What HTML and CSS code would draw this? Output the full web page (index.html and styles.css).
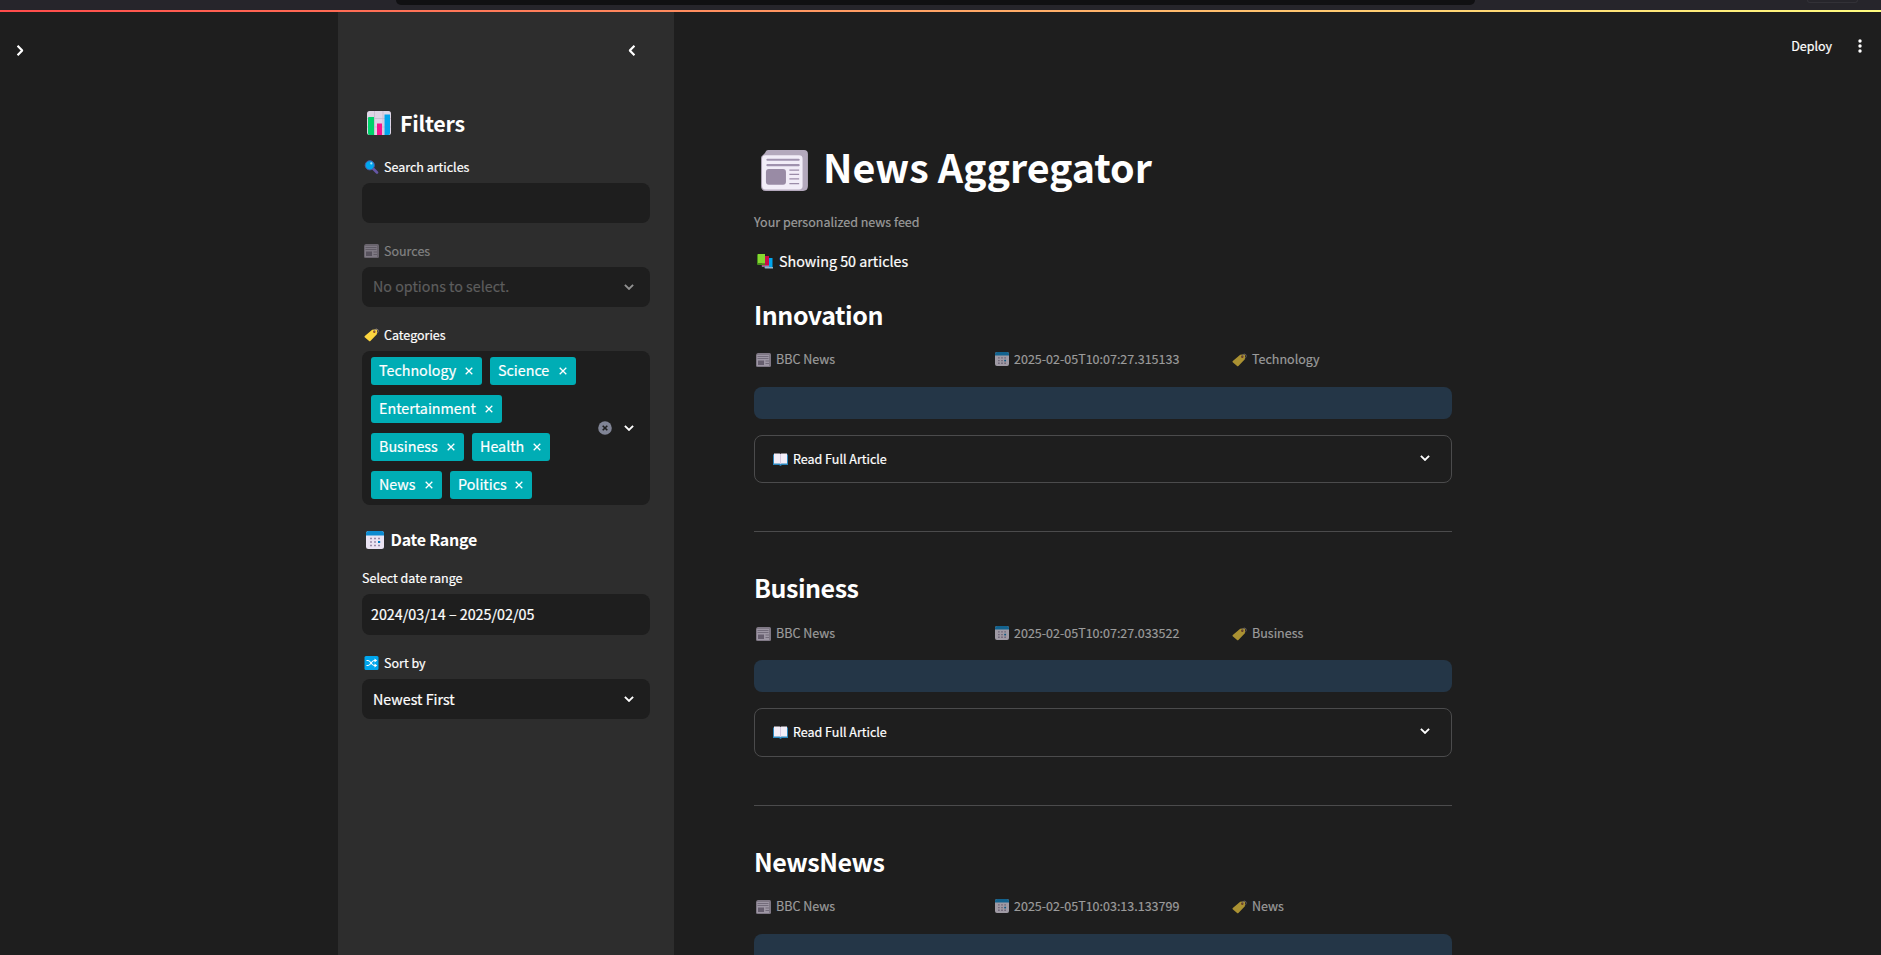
FILE: index.html
```html
<!DOCTYPE html>
<html lang="en">
<head>
<meta charset="utf-8">
<title>News Aggregator</title>
<link rel="stylesheet" href="styles.css">
</head>
<body>
<svg class="defs" aria-hidden="true">
  <symbol id="news" viewBox="0 0 48 42">
    <path d="M7 0h37q4 0 4 4v33q0 5-5 5H5q-5 0-5-5V8q0-2 2-3l2-2q1-3 3-3z" fill="#b4a9bd"/>
    <rect x="1" y="5.500" width="41.500" height="35" rx="3.500" fill="#f2edf8"/>
    <path d="M6.500 10h32M6.500 15.500h32" stroke="#a092ae" stroke-width="2.200" stroke-linecap="round"/>
    <path d="M29 20.500h10M29 25h10M29 29.500h10M29 34.500h10" stroke="#9b8ca8" stroke-width="1.300"/>
    <rect x="5" y="19.500" width="20.500" height="16" rx="3" fill="#998ba5"/>
  </symbol>
  <symbol id="news-small" viewBox="0 0 15 14">
    <path d="M2 0h11.500Q15 0 15 1.500v11q0 1.500-1.500 1.500h-12Q0 14 0 12.500V2Q.5.200 2 0z" fill="#a59bad"/>
    <path d="M1 2h12v11H1z" fill="#cfc5d8"/>
    <path d="M1.500 3.500h11M1.500 5.500h11M9.500 8H13M9.500 10.500H13" stroke="#8f8499" stroke-width=".9"/>
    <path d="M2 7.500h6V12H2z" fill="#82778e"/>
  </symbol>
  <symbol id="chart" viewBox="0 0 24 24">
    <rect width="24" height="24" rx="2.500" fill="#ded5e6"/>
    <path d="M7.500 0v24M16 0v24M0 7.500h24M0 16h24" stroke="#c5b9cf" stroke-width=".8"/>
    <path d="M1.500 6H7v18H2.500Q1 24 1 22V6.500z" fill="#00d26a"/>
    <path d="M10 12.500h5V24h-5z" fill="#f8128c"/>
    <path d="M17.500 3.500H23V22q0 2-1.500 2h-4z" fill="#00a6ed"/>
  </symbol>
  <symbol id="search" viewBox="0 0 14 14">
    <path d="M8.500 8.500l4 4" stroke="#6556a5" stroke-width="2.600" stroke-linecap="round"/>
    <circle cx="5.300" cy="5.300" r="4.600" fill="#00a6ed" stroke="#4b5aa8" stroke-width="1"/>
    <circle cx="6.800" cy="3.400" r="1.100" fill="#a5e0fb"/>
  </symbol>
  <symbol id="tag" viewBox="0 0 15 13">
    <path d="M8.200 1.300l4-.6 1 .9-.3 4.200-6.500 6.600q-.8.700-1.600-.2L.7 8.800q-.6-.7.100-1.400z" fill="#fcd53f"/>
    <circle cx="10.300" cy="3.300" r="1.200" fill="#8c4a28"/>
    <path d="M10.300 3q0-2.500 2.200-2.500 2.300.3 1.800 2.700-.3 1-1.400 1.500" fill="none" stroke="#8b8490" stroke-width=".8"/>
  </symbol>
  <symbol id="calendar" viewBox="0 0 18 18">
    <rect width="18" height="18" rx="2.500" fill="#eae3f2"/>
    <path d="M0 4.500V2.500Q0 0 2.500 0h13Q18 0 18 2.500v2z" fill="#0c8bd0"/>
    <path d="M4 7.500h11M4 11h11M4 14.500h11" stroke="#998aa8" stroke-width="1.700" stroke-dasharray="2 2"/>
    <rect x="12" y="10" width="2.200" height="2" fill="#007fc5"/>
  </symbol>
  <symbol id="shuffle" viewBox="0 0 14 14">
    <rect width="14" height="14" rx="1.500" fill="#00a6ed"/>
    <path d="M2 4.500h1.600c2.500 0 3.500 5 6 5H11M2 9.500h1.600c2.500 0 3.500-5 6-5H11" fill="none" stroke="#fff" stroke-width="1.200"/>
    <path d="M10 2.600l2.700 1.900L10 6.400zM10 7.600l2.700 1.900-2.700 1.900z" fill="#fff"/>
  </symbol>
  <symbol id="books" viewBox="0 0 16 15">
    <path d="M8 4h7.500v9.500H8z" fill="#00a6ed"/><path d="M7.500 13h8.500v1.600H8.500q-1 0-1-1.600z" fill="#8fb6ce"/>
    <path d="M5 2h7v10H5z" fill="#ca0b4a"/><path d="M4.500 11.500H12v1.300H5z" fill="#a893b5"/>
    <path d="M1 0h7v9.500H1z" fill="#86d72f"/><path d="M0 1q0-1 1-1v9.500h7V11H1q-1 0-1-1z" fill="#44911b"/>
  </symbol>
  <symbol id="book" viewBox="0 0 15 13">
    <path d="M0 1.500h15V12H9l-1.500 1L6 12H0z" fill="#2a86bd"/>
    <path d="M1 .5h5.700l.8.500.8-.5H14v10H8.300l-.8.700-.8-.7H1z" fill="#f3eef8"/>
    <path d="M7.500 1v10" stroke="#cdbfda" stroke-width=".8"/>
  </symbol>
  <symbol id="chevron" viewBox="0 0 10 6">
    <path d="M.9.900L5 4.900 9.100.900" fill="none" stroke="currentColor" stroke-width="1.900"/>
  </symbol>
  <symbol id="cross" viewBox="0 0 8 8">
    <path d="M.7.700l6.600 6.600M7.300.700L.7 7.300" stroke="currentColor" stroke-width="1.300"/>
  </symbol>
</svg>

<div class="browser"><div class="address"></div><div class="pill"></div></div>
<div class="rainbow"></div>
<div class="app">
  <div class="rail"><svg class="chev open"><use href="#chevron"/></svg></div>
  <aside class="sidebar">
    <div class="closer"><svg class="chev close"><use href="#chevron"/></svg></div>
    <h2 class="filters"><svg class="i-chart"><use href="#chart"/></svg><span>Filters</span></h2>

    <div class="label"><svg><use href="#search"/></svg><span>Search articles</span></div>
    <div class="field"></div>

    <div class="label dim"><svg><use href="#news-small"/></svg><span>Sources</span></div>
    <div class="field select disabled"><span>No options to select.</span><svg class="chev"><use href="#chevron"/></svg></div>

    <div class="label"><svg><use href="#tag"/></svg><span>Categories</span></div>
    <div class="field multi">
      <div class="tags">
        <div class="tag w-tech"><span>Technology</span><svg><use href="#cross"/></svg></div>
        <div class="tag w-sci"><span>Science</span><svg><use href="#cross"/></svg></div>
        <div class="tag w-ent"><span>Entertainment</span><svg><use href="#cross"/></svg></div>
        <div class="tag w-bus"><span>Business</span><svg><use href="#cross"/></svg></div>
        <div class="tag w-hea"><span>Health</span><svg><use href="#cross"/></svg></div>
        <div class="tag w-new"><span>News</span><svg><use href="#cross"/></svg></div>
        <div class="tag w-pol"><span>Politics</span><svg><use href="#cross"/></svg></div>
      </div>
      <svg class="clear" viewBox="0 0 14 14"><circle cx="7" cy="7" r="6.800" fill="#808495"/><path d="M4.700 4.700l4.600 4.600M9.300 4.700L4.700 9.300" stroke="#1e1e1e" stroke-width="1.600"/></svg>
      <svg class="chev"><use href="#chevron"/></svg>
    </div>

    <h3 class="range"><svg class="i-cal"><use href="#calendar"/></svg><span>Date Range</span></h3>
    <div class="label plain"><span>Select date range</span></div>
    <div class="field date"><span>2024/03/14 – 2025/02/05</span></div>

    <div class="label"><svg><use href="#shuffle"/></svg><span>Sort by</span></div>
    <div class="field select"><span>Newest First</span><svg class="chev"><use href="#chevron"/></svg></div>
  </aside>

  <main class="main">
    <div class="toolbar"><span>Deploy</span><svg class="dots" viewBox="0 0 4 14"><circle cx="2" cy="2" r="1.700"/><circle cx="2" cy="7" r="1.700"/><circle cx="2" cy="12" r="1.700"/></svg></div>
    <div class="content">
      <h1><svg class="i-title"><use href="#news"/></svg><span>News Aggregator</span></h1>
      <p class="caption"><span>Your personalized news feed</span></p>
      <p class="count"><svg><use href="#books"/></svg><span>Showing 50 articles</span></p>

      <article class="first">
        <h2>Innovation</h2>
        <div class="meta">
          <div><svg class="m-news"><use href="#news-small"/></svg><span>BBC News</span></div>
          <div><svg class="m-cal"><use href="#calendar"/></svg><span>2025-02-05T10:07:27.315133</span></div>
          <div><svg class="m-tag"><use href="#tag"/></svg><span>Technology</span></div>
        </div>
        <div class="info"></div>
        <div class="expander"><svg class="i-book"><use href="#book"/></svg><span>Read Full Article</span><svg class="chev"><use href="#chevron"/></svg></div>
        <hr>
      </article>

      <article class="second">
        <h2>Business</h2>
        <div class="meta">
          <div><svg class="m-news"><use href="#news-small"/></svg><span>BBC News</span></div>
          <div><svg class="m-cal"><use href="#calendar"/></svg><span>2025-02-05T10:07:27.033522</span></div>
          <div><svg class="m-tag"><use href="#tag"/></svg><span>Business</span></div>
        </div>
        <div class="info"></div>
        <div class="expander"><svg class="i-book"><use href="#book"/></svg><span>Read Full Article</span><svg class="chev"><use href="#chevron"/></svg></div>
        <hr>
      </article>

      <article class="last">
        <h2>NewsNews</h2>
        <div class="meta">
          <div><svg class="m-news"><use href="#news-small"/></svg><span>BBC News</span></div>
          <div><svg class="m-cal"><use href="#calendar"/></svg><span>2025-02-05T10:03:13.133799</span></div>
          <div><svg class="m-tag"><use href="#tag"/></svg><span>News</span></div>
        </div>
        <div class="info"></div>
      </article>
    </div>
  </main>
</div>
</body>
</html>
```
FILE: styles.css
```css
* { box-sizing: border-box; }
body {
  margin: 0;
  height: 955px;
  overflow: hidden;
  background: #1e1e1e;
  color: #fff;
  font-family: "Noto Sans CJK SC", "Noto Sans", sans-serif;
  font-size: 14.3px;
  -webkit-text-stroke: .2px currentColor;
  display: flex;
  flex-direction: column;
}
h1, h2, h3, p { margin: 0; }
h1, h2, h3 { -webkit-text-stroke: 0; }
span { white-space: nowrap; }
svg { flex: none; display: block; }
.defs { position: absolute; width: 0; height: 0; }

.browser {
  height: 10px;
  flex: none;
  background: #26252b;
  display: flex;
  padding-left: 396px;
}
.address { width: 1079px; height: 5px; background: #101012; border-radius: 0 0 7px 7px; }
.pill { width: 51px; height: 3px; margin-left: 332px; border: 1px solid #323137; border-top: 0; border-radius: 0 0 6px 6px; }
.rainbow { height: 2px; flex: none; background: linear-gradient(90deg, #ff4b4b, #fffd80); }

.app { display: flex; height: 943px; overflow: hidden; }
.rail { width: 338px; padding: 32px 0 0 15px; }
.chev { width: 10px; height: 6px; }
.open, .close { width: 12px; height: 7px; }
.open { transform: rotate(-90deg); margin: 2.500px 0 0 -1px; }
.close { transform: rotate(90deg); }

.sidebar { width: 336px; padding: 0 24px; background: #2d2d2d; }
.closer { height: 96px; padding: 34.500px 12px 0 0; display: flex; justify-content: flex-end; }
.filters { height: 29px; margin-bottom: 19px; display: flex; align-items: center; font-size: 21.4px; line-height: 29px; font-weight: 600; letter-spacing: -.25px; }
.i-chart { width: 24px; height: 24px; margin: 1px 9px 0 5px; }

.label { height: 21px; margin-bottom: 6px; display: flex; align-items: center; font-size: 12.5px; line-height: 21px; }
.label svg { margin-left: 2px; margin-right: 5px; width: 15px; height: 14px; }
.dim { color: #828282; }
.dim svg { opacity: .5; margin-top: 1px; }
.field {
  height: 40px;
  margin-bottom: 17px;
  border-radius: 8px;
  background: #1e1e1e;
  display: flex;
  align-items: center;
  line-height: 24px;
}
.select { justify-content: space-between; padding: 0 16px 0 11px; }
.disabled { color: #5d5d5d; }
.disabled span { margin-top: -2px; }
.disabled .chev { color: #929292; }
.multi { height: 154px; margin-bottom: 20px; padding-right: 16px; }
.tags { width: 231px; padding-left: 9px; display: flex; flex-wrap: wrap; gap: 10px 8px; }
.tag {
  height: 28px;
  padding: 0 9px 0 8px;
  border-radius: 3px;
  background: #00adb5;
  display: flex;
  align-items: center;
  justify-content: space-between;
}
.tag span { margin-top: -2px; }
.tag svg { width: 8px; height: 8px; margin-top: 0; }
.w-tech { width: 111px; }
.w-sci { width: 86px; }
.w-ent { width: 131px; margin-right: 40px; }
.w-bus { width: 93px; }
.w-hea { width: 78px; }
.w-new { width: 71px; }
.w-pol { width: 82px; }
.clear { width: 14px; height: 14px; margin: 0 12px 0 auto; }
.range { height: 28px; margin-bottom: 14px; display: flex; align-items: center; font-size: 16px; line-height: 28px; font-weight: 600; letter-spacing: -.25px; }
.i-cal { width: 18px; height: 18px; margin: 1px 7px 0 3.500px; }
.date { height: 41px; padding: 0 0 1px 9px; }

.main { width: 1207px; }
.toolbar { height: 127px; padding: 23px 19px 0 0; display: flex; justify-content: flex-end; align-items: flex-start; font-size: 12.5px; line-height: 22px; }
.dots { width: 4px; height: 14px; margin: 4px 0 0 26px; fill: #fff; }
.content { width: 698px; margin-left: 80px; }
h1 { height: 53px; display: flex; align-items: center; font-size: 39.4px; line-height: 53px; font-weight: 700; }
.i-title { width: 47px; height: 41px; margin: 10px 15px 0 7px; }
.caption { height: 21px; margin-top: 19px; font-size: 12.5px; line-height: 21px; color: #9b9b9b; }
.count { height: 24px; margin: 17px 0 24px; display: flex; align-items: center; line-height: 24px; }
.count svg { width: 16px; height: 15px; margin: 1px 6px 0 3px; }

article { height: 274px; }
.first { height: 273px; }
.last { height: 137px; overflow: hidden; }
article h2 { height: 34px; font-size: 25px; line-height: 34px; font-weight: 600; letter-spacing: -.47px; }
.meta { height: 21px; margin-top: 17px; display: grid; grid-template-columns: 238px 238px 1fr; font-size: 12.5px; line-height: 21px; color: #9b9b9b; }
.meta div { display: flex; align-items: center; }
.meta svg { opacity: .63; width: 15px; height: 14px; margin: 2px 5px 0 2px; }
.meta .m-news { opacity: .72; }
.meta .m-cal { width: 14px; height: 14px; margin: 0 5px 0 3px; }
.info { height: 32px; margin-top: 18px; border-radius: 8px; background: #243647; }
.expander { height: 48px; margin-top: 16px; padding: 0 21px 0 18px; border: 1px solid #4b4b4c; border-radius: 8px; display: flex; align-items: center; font-size: 12.5px; line-height: 21px; }
.expander span { margin-top: -1px; }
.i-book { width: 15px; height: 13px; margin: 1px 5px 0 0; }
.expander .chev { margin: -2px 0 0 auto; }
hr { height: 1px; margin: 48px 0 0; border: 0; background: #4b4b4c; }

.second .meta { margin-top: 18px; }
.second .info { margin-top: 17px; }
.second .expander { height: 49px; padding-bottom: 1px; }
```
